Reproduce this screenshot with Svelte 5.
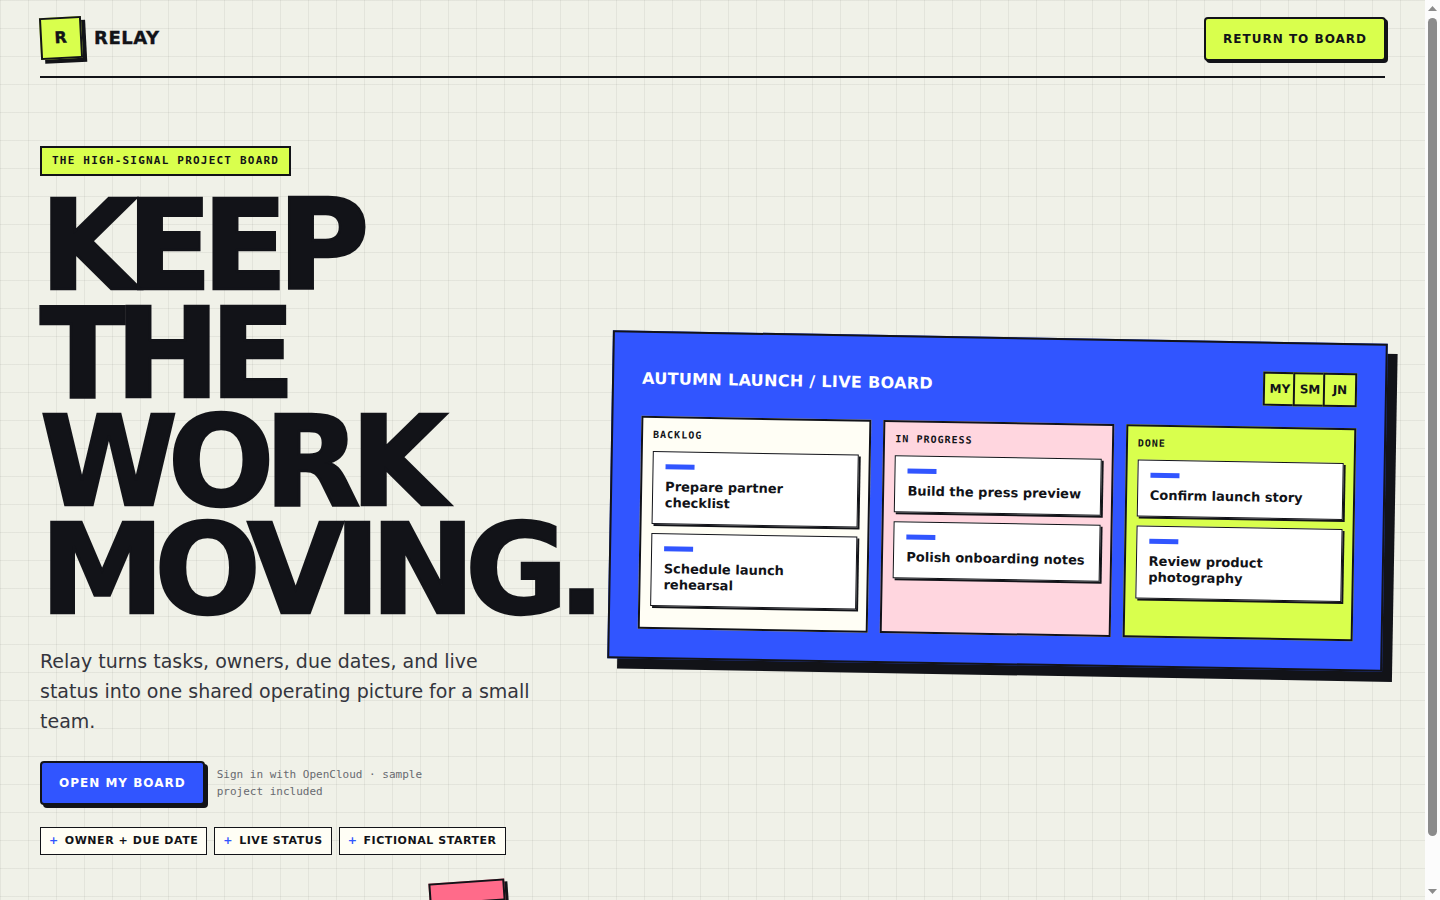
<script lang="ts">
	type Column = { name: string; tone: string; tasks: string[] };

	const owners = ['MY', 'SM', 'JN'];
	const features = ['OWNER + DUE DATE', 'LIVE STATUS', 'FICTIONAL STARTER'];
	const columns: Column[] = [
		{ name: 'BACKLOG', tone: 'paper', tasks: ['Prepare partner checklist', 'Schedule launch rehearsal'] },
		{ name: 'IN PROGRESS', tone: 'pink', tasks: ['Build the press preview', 'Polish onboarding notes'] },
		{ name: 'DONE', tone: 'lime', tasks: ['Confirm launch story', 'Review product photography'] }
	];
</script>

<div class="shell">
	<div class="page">
		<header>
			<a class="brand" href="/">
				<span class="mark">R</span>
				<span>RELAY</span>
			</a>
			<button type="button" class="btn return">RETURN TO BOARD</button>
		</header>

		<main>
			<section class="intro">
				<p class="eyebrow">THE HIGH-SIGNAL PROJECT BOARD</p>
				<h1>KEEP THE WORK MOVING.</h1>
				<p class="lede">
					Relay turns tasks, owners, due dates, and live status into one shared operating picture for
					a small team.
				</p>
				<div class="actions">
					<button type="button" class="btn primary">OPEN MY BOARD</button>
					<p class="note">Sign in with OpenCloud · sample project included</p>
				</div>
				<ul class="features">
					{#each features as feature}
						<li><span class="plus">+</span><span>{feature}</span></li>
					{/each}
				</ul>
				<span class="sticker"></span>
			</section>

			<section class="board">
				<div class="board-head">
					<h2>AUTUMN LAUNCH / LIVE BOARD</h2>
					<div class="owners">
						{#each owners as owner}
							<span>{owner}</span>
						{/each}
					</div>
				</div>
				<div class="columns">
					{#each columns as column}
						<div class="column {column.tone}">
							<h3>{column.name}</h3>
							{#each column.tasks as task}
								<article>{task}</article>
							{/each}
						</div>
					{/each}
				</div>
			</section>
		</main>
	</div>

	<div class="scrollbar" aria-hidden="true">
		<svg width="9" height="5" viewBox="0 0 9 5"><path d="M4.5 0 9 5H0z" /></svg>
		<div class="track"><div class="thumb"></div></div>
		<svg width="9" height="5" viewBox="0 0 9 5"><path d="M0 0h9L4.5 5z" /></svg>
	</div>
</div>

<style>
	.shell {
		--ink: #121318;
		--blue: #3155ff;
		--lime: #d9ff4d;
		--sans: 'DejaVu Sans', sans-serif;
		--mono: 'DejaVu Sans Mono', monospace;
		display: grid;
		grid-template-columns: minmax(0, 1fr) 15px;
		height: 100vh;
		overflow: hidden;
		color: var(--ink);
		font-family: var(--sans);
	}
	.page {
		padding: 0 40px 32px;
		overflow: hidden;
		background-color: #f0f1e8;
		background-image:
			linear-gradient(rgba(18, 19, 24, 0.06) 1px, transparent 1px),
			linear-gradient(90deg, rgba(18, 19, 24, 0.06) 1px, transparent 1px);
		background-size: 28px 28px;
	}
	header {
		display: flex;
		align-items: center;
		justify-content: space-between;
		padding: 16px 0;
		border-bottom: 2px solid var(--ink);
	}
	/* The heaviest text is thicker than the bold face */
	.brand, h1 { -webkit-text-stroke: 0.02em currentColor; }
	.brand {
		display: flex;
		align-items: center;
		gap: 12px;
		color: inherit;
		font-size: 18px;
		font-weight: 900;
		letter-spacing: 0.03em;
		line-height: 20px;
		text-decoration: none;
	}
	.mark {
		display: grid;
		place-items: center;
		box-sizing: border-box;
		width: 42px;
		height: 42px;
		border: 2px solid var(--ink);
		background: var(--lime);
		box-shadow: 4px 4px 0 var(--ink);
		font-size: 16px;
		transform: rotate(-3deg);
	}
	.btn {
		height: 44px;
		padding: 0 17px;
		border: 2px solid var(--ink);
		border-radius: 4px;
		font: 900 12px var(--sans);
		letter-spacing: 1px;
		cursor: pointer;
	}
	.return {
		background: var(--lime);
		color: var(--ink);
		box-shadow: 2px 2px 0 var(--ink);
		transform: translate(1px, 1px);
	}
	.primary {
		background: var(--blue);
		color: #fff;
		box-shadow: 3px 3px 0 var(--ink);
	}

	main {
		display: grid;
		grid-template-columns: minmax(0, 540fr) minmax(0, 775fr);
		align-items: center;
		gap: 30px;
		padding: 68px 0;
	}
	.intro { position: relative; }
	.eyebrow {
		width: fit-content;
		margin: 0 0 16px;
		padding: 6px 10px;
		border: 2px solid var(--ink);
		background: var(--lime);
		font: 900 11px/14px var(--mono);
		letter-spacing: 0.11em;
	}
	h1 {
		margin: 0;
		font-size: 125px;
		font-weight: 900;
		line-height: 108px;
		letter-spacing: -0.08em;
	}
	.lede {
		max-width: 500px;
		margin: 22px 0 25px;
		color: #34353d;
		font-size: 19px;
		line-height: 30px;
	}
	.actions { display: flex; align-items: center; gap: 12px; }
	.note {
		max-width: 220px;
		margin: 0;
		color: #686a70;
		font: 11px/17px var(--mono);
	}
	.features {
		display: flex;
		gap: 7px;
		margin: 22px 0 0;
		padding: 0;
		list-style: none;
	}
	.features li {
		display: flex;
		gap: 6px;
		padding: 5px 8px;
		border: 1px solid var(--ink);
		background: #fffef5;
		font-size: 11px;
		font-weight: 700;
		line-height: 16px;
		letter-spacing: 0.05em;
		white-space: nowrap;
	}
	.plus { color: var(--blue); }
	/* Pink note tucked under the intro */
	.sticker {
		position: absolute;
		top: calc(100% + 26px);
		left: 389px;
		box-sizing: border-box;
		width: 76px;
		height: 22px;
		border: 2px solid var(--ink);
		background: #ff6b8a;
		box-shadow: 3px 3px 0 var(--ink);
		transform: rotate(-4deg);
	}

	.board {
		padding: 28px;
		border: 2px solid var(--ink);
		background: var(--blue);
		box-shadow: 10px 10px 0 var(--ink);
		transform: rotate(1deg);
	}
	.board-head {
		display: flex;
		align-items: center;
		justify-content: space-between;
		margin-bottom: 21px;
	}
	h2 {
		margin: 0;
		color: #fff;
		font-size: 16px;
		letter-spacing: 0.02em;
	}
	.owners { display: flex; }
	.owners span {
		display: grid;
		place-items: center;
		box-sizing: border-box;
		width: 34px;
		height: 34px;
		border: 2px solid var(--ink);
		background: var(--lime);
		font-size: 12px;
		font-weight: 700;
	}
	.owners span + span { margin-left: -4px; }
	.columns { display: grid; grid-template-columns: repeat(3, minmax(0, 1fr)); gap: 12px; }
	.column {
		box-sizing: border-box;
		min-height: 213px;
		padding: 10px;
		border: 2px solid var(--ink);
	}
	.paper { background: #fffef5; }
	.pink { background: #ffd6df; }
	.lime { background: var(--lime); }
	h3 {
		margin: 0 0 9px;
		font: 700 10px/14px var(--mono);
		letter-spacing: 0.1em;
	}
	article {
		padding: 12px;
		border: 1px solid var(--ink);
		background: #fff;
		box-shadow: 2px 2px 0 var(--ink);
		font-size: 13px;
		font-weight: 700;
		line-height: 16px;
	}
	article + article { margin-top: 9px; }
	article::before {
		content: '';
		display: block;
		width: 29px;
		height: 5px;
		margin-bottom: 10px;
		background: var(--blue);
	}

	.scrollbar {
		display: flex;
		flex-direction: column;
		align-items: center;
		gap: 7px;
		padding: 6px 0;
		background: #fcfcfc;
	}
	.scrollbar svg { flex: none; fill: #8b8b8b; }
	.track { flex: 1; }
	.thumb {
		width: 9px;
		height: calc(100% - 46px);
		border-radius: 5px;
		background: #8b8b8b;
	}
</style>
